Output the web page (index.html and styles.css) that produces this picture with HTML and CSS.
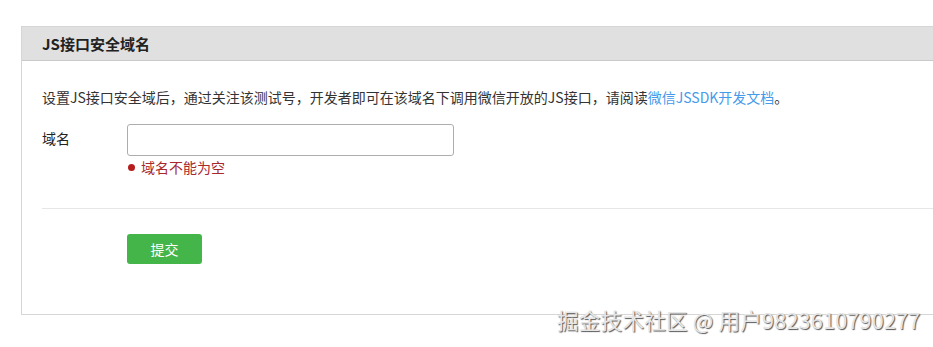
FILE: index.html
```html
<!DOCTYPE html>
<html lang="zh-CN">
<head>
<meta charset="utf-8">
<title>JS接口安全域名</title>
<link rel="stylesheet" href="styles.css">
</head>
<body>
<div class="page">
  <div class="panel">
    <div class="panel-hd">JS接口安全域名</div>
    <div class="panel-bd">
      <p class="desc">设置JS接口安全域后，通过关注该测试号，开发者即可在该域名下调用微信开放的JS接口，请阅读<a class="link" href="#">微信JSSDK开发文档</a>。</p>
      <div class="field">
        <label class="label">域名</label>
        <div class="control">
          <input class="input" type="text">
          <div class="error"><span class="dot"></span>域名不能为空</div>
        </div>
      </div>
      <div class="divider"></div>
      <div class="actions">
        <button class="btn" type="button">提交</button>
      </div>
    </div>
  </div>
  <div class="watermark">掘金技术社区 @ 用户9823610790277</div>
</div>
</body>
</html>
```
FILE: styles.css
```css
html, body {
  margin: 0;
  padding: 0;
  background: #fff;
  overflow: hidden;
}
body {
  font-family: "Noto Sans CJK SC", "Microsoft YaHei", sans-serif;
  font-size: 14px;
  color: #222;
}
.page {
  position: relative;
  padding: 26px 0 0 21px;
  height: 321px;
}
.panel {
  width: 940px;
  border: 1px solid #d6d6d6;
  border-right: 0;
}
.panel-hd {
  height: 33px;
  line-height: 33px;
  background: #e0e0e0;
  border-bottom: 1px solid #c9c9c9;
  padding-left: 20px;
  font-size: 15px;
  font-weight: bold;
  color: #222;
}
.panel-bd {
  padding: 26px 0 50px 20px;
}
.desc {
  margin: 0;
  line-height: 20px;
  color: #333;
}
.link {
  color: #459ae9;
  text-decoration: none;
}
.field {
  display: flex;
  margin-top: 17px;
}
.label {
  width: 85px;
  line-height: 28px;
  color: #222;
}
.control {
  display: flex;
  flex-direction: column;
}
.input {
  box-sizing: border-box;
  width: 327px;
  height: 32px;
  margin: 0;
  border: 1px solid #adadad;
  border-radius: 3px;
  background: #fff;
  padding: 0 8px;
}
.error {
  display: flex;
  align-items: center;
  margin-top: 1px;
  line-height: 20px;
  color: #a8282c;
}
.dot {
  width: 7px;
  height: 7px;
  border-radius: 50%;
  background: #b51c1c;
  margin: 0 6px 0 1px;
}
.divider {
  height: 1px;
  background: #e6e6e6;
  margin-top: 31px;
}
.actions {
  padding: 25px 0 0 85px;
}
.btn {
  width: 75px;
  height: 30px;
  border: 0;
  border-radius: 3px;
  background: #44b549;
  color: #fff;
  font-family: inherit;
  font-size: 14px;
  padding: 0;
}
.watermark {
  position: absolute;
  left: 557px;
  top: 306px;
  font-family: "Noto Sans CJK SC", sans-serif;
  font-size: 21.6px;
  line-height: 28px;
  color: #e6e6e6;
  text-shadow: 1px 1px 1px #555;
  letter-spacing: 0.2px;
}
```
